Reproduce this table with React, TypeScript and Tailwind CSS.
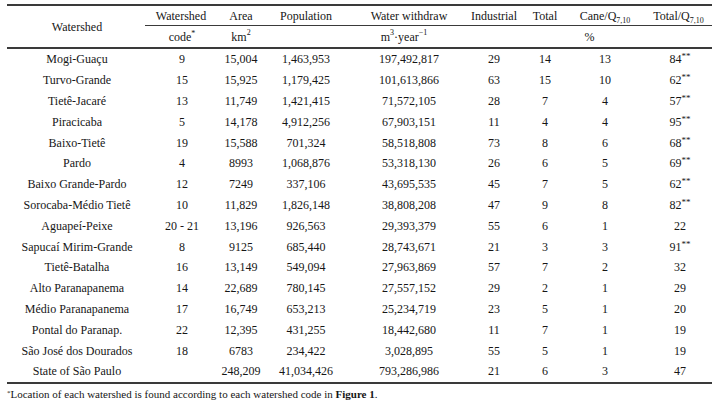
import React from 'react';

type Row = [string, string, string, string, string, string, string, string, string, boolean];

const rows: Row[] = [
  ['Mogi-Guaçu', '9', '15,004', '1,463,953', '197,492,817', '29', '14', '13', '84', true],
  ['Turvo-Grande', '15', '15,925', '1,179,425', '101,613,866', '63', '15', '10', '62', true],
  ['Tietê-Jacaré', '13', '11,749', '1,421,415', '71,572,105', '28', '7', '4', '57', true],
  ['Piracicaba', '5', '14,178', '4,912,256', '67,903,151', '11', '4', '4', '95', true],
  ['Baixo-Tietê', '19', '15,588', '701,324', '58,518,808', '73', '8', '6', '68', true],
  ['Pardo', '4', '8993', '1,068,876', '53,318,130', '26', '6', '5', '69', true],
  ['Baixo Grande-Pardo', '12', '7249', '337,106', '43,695,535', '45', '7', '5', '62', true],
  ['Sorocaba-Médio Tietê', '10', '11,829', '1,826,148', '38,808,208', '47', '9', '8', '82', true],
  ['Aguapeí-Peixe', '20 - 21', '13,196', '926,563', '29,393,379', '55', '6', '1', '22', false],
  ['Sapucaí Mirim-Grande', '8', '9125', '685,440', '28,743,671', '21', '3', '3', '91', true],
  ['Tietê-Batalha', '16', '13,149', '549,094', '27,963,869', '57', '7', '2', '32', false],
  ['Alto Paranapanema', '14', '22,689', '780,145', '27,557,152', '29', '2', '1', '29', false],
  ['Médio Paranapanema', '17', '16,749', '653,213', '25,234,719', '23', '5', '1', '20', false],
  ['Pontal do Paranap.', '22', '12,395', '431,255', '18,442,680', '11', '7', '1', '19', false],
  ['São José dos Dourados', '18', '6783', '234,422', '3,028,895', '55', '5', '1', '19', false],
  ['State of São Paulo', '', '248,209', '41,034,426', '793,286,986', '21', '6', '3', '47', false],
];

const cols = 'grid grid-cols-[140px_70px_48px_82px_124px_46px_56px_64px_75px]';

function Q() {
  return (
    <span>
      Q<span className="relative top-[3px] text-[8px]">7,10</span>
    </span>
  );
}

export default function App() {
  return (
    <div
      className="w-[720px] h-[407px] bg-white text-[#161616] pt-[4px] px-[7px]"
      style={{ fontFamily: '"Liberation Serif", "Times New Roman", serif' }}
    >
      <div className="w-[705px] border-t-2 border-[#3a3a3a] text-[12px]">
        {/* header */}
        <div className={`${cols} h-[41px]`}>
          <div className="row-span-2 flex items-center justify-center">Watershed</div>
          <div className="col-span-8 -ml-[2px] grid grid-cols-[72px_48px_82px_124px_46px_56px_64px_75px] h-[20px] border-b border-[#3a3a3a] items-center text-center">
            <div>Watershed</div>
            <div>Area</div>
            <div>Population</div>
            <div>Water withdraw</div>
            <div>Industrial</div>
            <div>Total</div>
            <div>
              Cane/<Q />
            </div>
            <div className="pl-[8px]">
              Total/<Q />
            </div>
          </div>
          <div className="h-[21px] flex items-center justify-center">
            code<span className="relative -top-[3px] text-[8px]">*</span>
          </div>
          <div className="h-[21px] flex items-center justify-center">
            km<span className="relative -top-[4px] text-[8px]">2</span>
          </div>
          <div />
          <div className="h-[21px] flex items-center justify-center pr-[10px]">
            m<span className="relative -top-[4px] text-[8px]">3</span>·year
            <span className="relative -top-[4px] text-[8px]">−1</span>
          </div>
          <div className="col-span-4 h-[21px] flex items-center justify-center pr-[4px]">%</div>
        </div>
        <div className="border-t-2 border-[#3a3a3a]" />
        {/* body */}
        <div className="border-b-2 border-[#3a3a3a]">
          {rows.map((r) => (
            <div key={r[0]} className={`${cols} h-[20.8px] items-center text-center`}>
              <div>{r[0]}</div>
              <div>{r[1]}</div>
              <div>{r[2]}</div>
              <div>{r[3]}</div>
              <div>{r[4]}</div>
              <div>{r[5]}</div>
              <div>{r[6]}</div>
              <div>{r[7]}</div>
              <div className="pl-[11px]">
                {r[8]}
                {r[9] && <span className="relative -top-[4px] text-[9px]">**</span>}
              </div>
            </div>
          ))}
        </div>
      </div>
      <div className="text-[11px] leading-[14px] mt-[3px]">
        <span className="relative -top-[3px] text-[7px]">*</span>Location of each watershed is found according to each watershed code in{' '}
        <span className="font-bold">Figure 1</span>.
      </div>
    </div>
  );
}
